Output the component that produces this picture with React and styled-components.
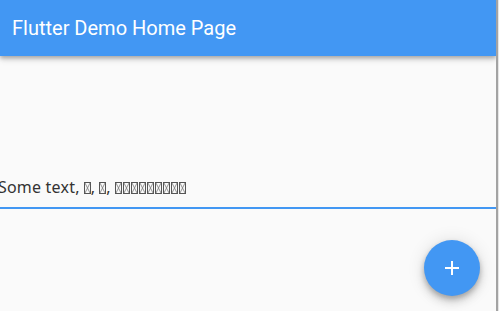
import React from "react";
import styled, { createGlobalStyle } from "styled-components";

const GlobalStyle = createGlobalStyle`
  html, body {
    margin: 0;
    padding: 0;
    height: 100%;
    overflow: hidden;
    background: #e6e6e6;
  }
  #root {
    height: 100%;
  }
`;

const Frame = styled.div`
  position: relative;
  width: 496px;
  height: 100%;
  background: #fafafa;
  border-right: 2px solid #a3a3a3;
  overflow: hidden;
  display: flex;
  flex-direction: column;
`;

const AppBar = styled.header`
  height: 56px;
  flex-shrink: 0;
  background: #4297f3;
  display: flex;
  align-items: center;
  padding: 0 12px;
  box-shadow: 0 2px 4px rgba(0, 0, 0, 0.25), 0 4px 6px rgba(0, 0, 0, 0.12);
  z-index: 1;
`;

const Title = styled.h1`
  margin: 0;
  font-family: Roboto, "Liberation Sans", sans-serif;
  font-size: 20px;
  font-weight: 400;
  color: #ffffff;
`;

const Body = styled.main`
  flex: 1;
  padding-top: 120px;
`;

const Field = styled.div`
  border-bottom: 2px solid #4297f3;
  padding-bottom: 9px;
`;

const FieldText = styled.div`
  margin-left: -2px;
  font-family: "Noto Sans", "DejaVu Sans", sans-serif;
  font-size: 16px;
  letter-spacing: 0.2px;
  line-height: 22px;
  color: #333333;
  white-space: nowrap;
  display: flex;
  align-items: center;
`;

const TofuRow = styled.span`
  display: inline-flex;
  gap: 1px;
  margin-left: ${(p) => p.$gap || 0}px;
  margin-top: 2px;
`;

const TofuBox = styled.svg`
  width: 7px;
  height: 12px;
  display: block;
`;

const Fab = styled.button`
  position: absolute;
  right: 16px;
  bottom: 15px;
  width: 56px;
  height: 56px;
  border: none;
  border-radius: 50%;
  background: #4297f3;
  display: flex;
  align-items: center;
  justify-content: center;
  padding: 0;
  box-shadow: 0 3px 5px rgba(0, 0, 0, 0.2), 0 6px 10px rgba(0, 0, 0, 0.14),
    0 1px 18px rgba(0, 0, 0, 0.12);
`;

function Tofu() {
  return (
    <TofuBox viewBox="0 0 7 12">
      <rect x="0.5" y="0.5" width="6" height="11" fill="none" stroke="#555" />
      <path d="M1 1 L6 11 M6 1 L1 11" stroke="#777" strokeWidth="0.8" />
    </TofuBox>
  );
}

function Tofus({ count, gap }) {
  return (
    <TofuRow $gap={gap}>
      {Array.from({ length: count }).map((_, i) => (
        <Tofu key={i} />
      ))}
    </TofuRow>
  );
}

export default function App() {
  return (
    <>
      <GlobalStyle />
      <Frame>
        <AppBar>
          <Title>Flutter Demo Home Page</Title>
        </AppBar>
        <Body>
          <Field>
            <FieldText>
              Some text,
              <Tofus count={1} gap={4} />,
              <Tofus count={1} gap={4} />,
              <Tofus count={9} gap={4} />
            </FieldText>
          </Field>
        </Body>
        <Fab aria-label="add">
          <svg width="24" height="24" viewBox="0 0 24 24" fill="#fff">
            <path d="M19 13h-6v6h-2v-6H5v-2h6V5h2v6h6v2z" />
          </svg>
        </Fab>
      </Frame>
    </>
  );
}
